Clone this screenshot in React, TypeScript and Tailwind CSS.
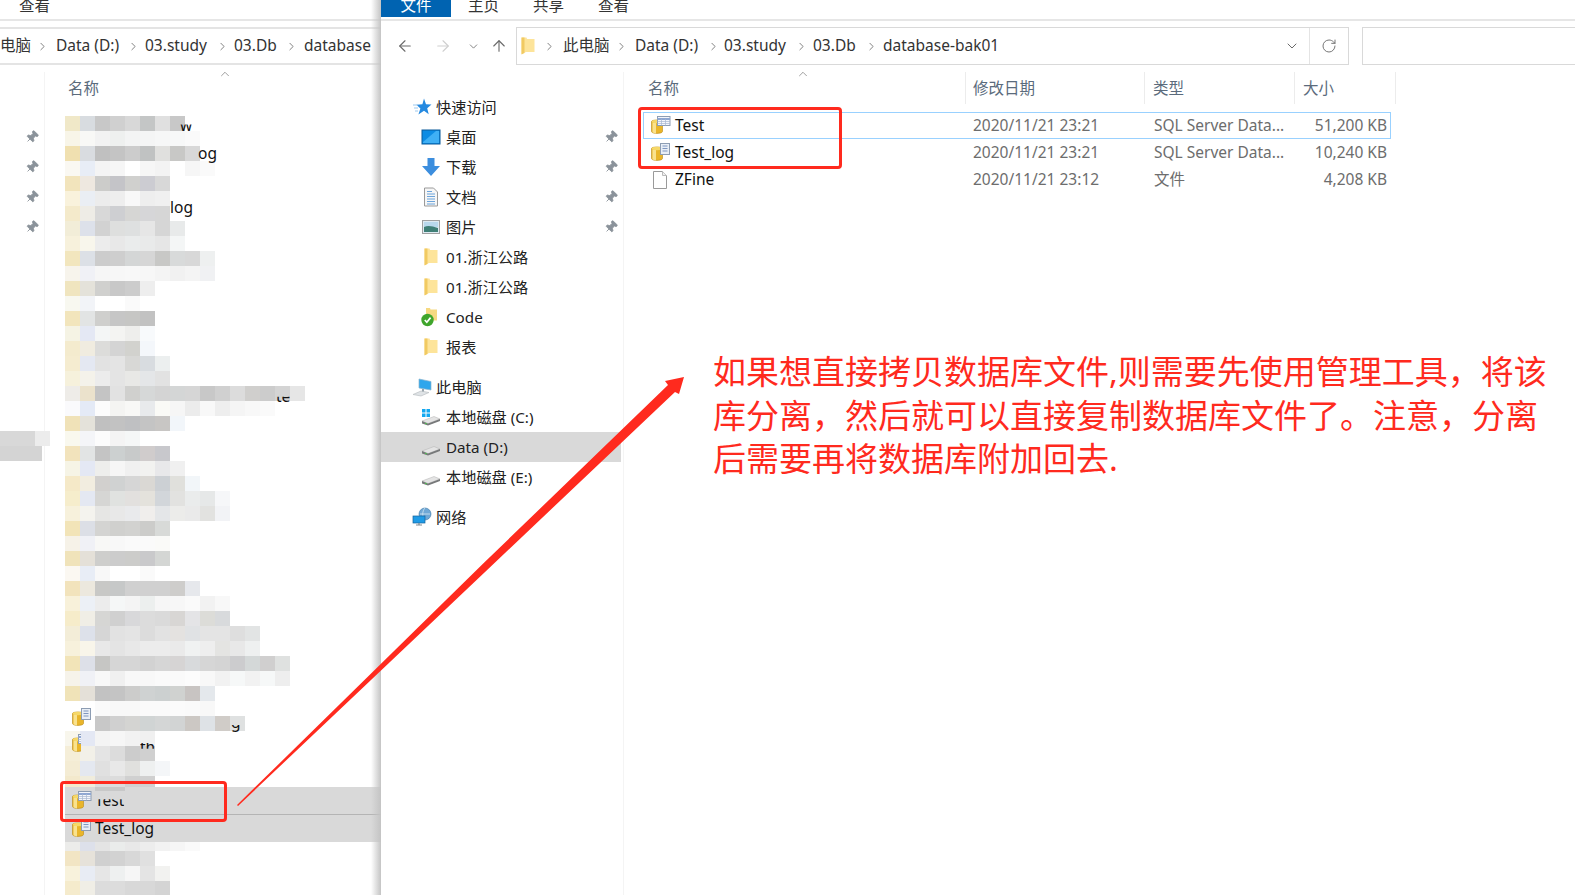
import { ArrowLeft, ArrowRight, ArrowUp, ChevronDown, ChevronRight, ChevronUp, Pin, RotateCw } from "lucide-react";
import type { ReactNode } from "react";

// Blurred file names in the left window: one string per 15px row, one colour per 15px cell.
const mosaicTop = [
  "f0e8c8 d8dce0 c8c8c8 d0d0d0 d8d8d8 c4c6c6 e0e0e0 c8c8c8",
  "f8f5e8 f8f8f6 f2f2f2 eef0ef f3f4f4 f4f5f5 f6f7f7 f7f8f8 fafafa",
  "f0e0b0 d9dce0 c0c0c0 c4c4c4 cccccc c0c2c2 e0e0de c8c8c6 d8d8d8",
  "faf8f2 e8edf6 f4f4f4 f6f6f6 ffffff f6f6f6 f3f3f3 ffffff f6f6f6 fafafa",
  "f2e4bc eee8e0 ccccca c4c4c8 d0d0ce ccccd2 d8d8d8",
  "f9f2dc eaeef4 ececec eeeeee f8f8f8 eeeeee f0f0f0",
  "f4eacb eeece6 d8d8d8 cecfd2 d6d6d4 d6d6d8 d6d6d6",
  "f2edd8 dde1ea d2d2d2 dedfde dee0e0 e6e6e6 d6d6d6 e8eaea",
  "f7f1dc f8f6ec ececec e8e8e8 eaecec e9eaea e6e6e6 f4f6f6",
  "f2e6be dce0e6 cccccc cecece d4d6d6 d6d6d6 c8c8c6 d8dada d8d8d8 eef0f0",
  "f7f4ec f0f1f6 f6f6f6 f7f7f7 f8f8f8 f7f7f7 f4f4f4 f1f1f1 f4f4f4 f0f1f3",
  "f0e5bf e4e2da d0d0ce c8c8c8 cccccc eeeeee",
  "f8f8f0 f2f4f8 ffffff ffffff fafafa ffffff",
  "f2e5bc e2e4e4 cfcfcd c6c6c6 c6c6c4 c2c2c2",
  "f5f3e4 e4e8f4 f4f6f6 f4f4f2 eeeeec f8fafc",
  "f4ebce f0ece0 dcdcda d4d4d4 d2d2ce f4f7fb",
  "f5ecd0 e4e8f2 e2e2e2 e4e4e4 d8d8d6 d8dce0 ecefef",
  "f6f1dc f4f2ea ececec e4e4e4 e8e8e6 e4e6e8 e2e2e2",
  "eeece8 ebe2cc c4c4c4 e2e2e2 d0d0ce d6d8d8 d4d4d4 d4d6d6 d6d6d6 c8c8c8 d0d0d0 dcdcdc d0cfcd cccccc d4d4d4 e6e6e6",
  "fafafc e4eaf6 fcfcfc f4f4f2 f8f8f6 e8eaec fafaf6 f6f6f6 ececec f8f8f8 eeeeee f5f5f5 f8f8f8 fafafa",
  "f0e2b8 e4e2da c0c0c0 c2c2c2 bfc0c2 c4c4c4 c8c6c4 f2f6fa",
  "f9f8ee f4f5f8 fcfcfc f4f4f4 f5f7f7",
  "f2e3bc e2e4e4 c4c4c4 ccd0d0 c8caca d0cccc c8c8cc",
  "f6f4e6 e4e8f4 eeeeec f6f6f6 f0f0f0 f2f2f0 e8e8ea f0f0f0",
  "f5e9c8 f2ede0 d2d0ce d0d2d2 d6d6d6 dad8d4 ccd0d4 e0e0dc f2f6f9",
  "f6edcc e4e8f2 d6d6d4 e0e2e0 e2e0de e4e2dc d2d6da e2e2e0 eaecec e6e8e8 f6f7f9",
  "f7f1dc f4f3ee e6e6e4 e8e8e8 e9eaec f0eeec e4e6e8 ececea eaeaea e2e2e0 f2f3f6",
  "f2e4b8 dcdfe6 d4d4d2 d0d0ce d2d2d0 ccccca d8dad8",
  "f6f2e8 f0f1f6 f8f8f6 f8f8f8 fafafa fafafa fafaf8",
  "f0e3ba e4e0d8 cececc cccccc ccccca c9c9cb d4d6d4",
  "fbf8f2 e8edf6 f8f8f8 ffffff ffffff fafafa",
  "f2e3bc ece8de c8c8c6 c6c8c8 d0d0d0 d0d0d0 d0d0d0 cecdcb e6e8ec",
  "f8f1da ecf0f6 ececec f5f7f7 f4f4f4 ecefee f6f6f6 f7f7f7 fafafa f2f2f2 f8f8f8",
  "f6ecca f0eee6 d6d6d4 d0d0d0 d8d8da dcdcdc dadada d8d6d4 e4e4e6 dcdcd8 d8dadc",
  "f3edd8 dde1ea d6d6d6 e2e2e2 e4e4e4 dcdcdc e2e2e2 e4e2e0 e0e2e4 e4e4e4 e4e4e4 dedede e2e4e4",
  "f7f1dc f8f5ea e8e8e8 e4e4e4 e8e8e8 ececec ececec eaeaea f0f2f2 eeeeee e4e4e2 e8e8e8 eef0f0",
  "f2e4b8 dde0e8 c6c6c4 d6d6d6 d6d6d6 d2d2d2 d6d6d6 d6d4d4 d8dadc d6d6d6 d4d4d4 ccccce d4d8d8 d0cfcf dfe1e0",
  "f6f3ea f0f1f6 f8f8f8 f0f0f0 f8f8f8 f8f8f8 fafafa fafafa fcfcfc f8f8f8 f2f2f2 f6f8f8 f2f2f2 f6f8f8 eeeeee",
  "f0e3b8 e4e0d8 c2c2c2 c4c4c4 cccccb cfd2d2 ccd0d0 d0d2d0 c8c4c2 e4e8ec",
  "ffffff ffffff fafafa f8f8f8 f8f8f8 fafafa fafafa fbfbfb fafafa f8f8f8",
  "ffffff ffffff c8c8c8 d0d0d0 d4d4d2 d0d4d4 d4d6d6 d2d4d4 ccc8c4 dee2e6 d0ccc8 dfe1e1",
  "f8f6ec e4e8f4 f4f4f4 f6f6f6 f2f2f2 f0f0f0",
  "f5eed8 f2f0e8 e4e4e4 dcdcdc cccccc d0d0d0",
  "f4ecd4 e4e8f0 e0e0e0 e8e8e8 e0e0de eef0f0 f4f6f8",
];
const mosaicBottom = [
  "ececea dde0ea e4e4e4 eaeceb e8e8e8 ededed f2f2f2 f6f6f6 fafafa",
  "f2e5c4 e6e2da d0d0d0 d2d2d2 d8d8d8 e0e0e0",
  "f8f2dc e8ecf4 e6e6e6 eef0f0 f6f6f6 e4e4e4 f2f2f0",
  "f5ebcc f0eee6 dcdcdc dcdcdc d8d8d8 d8d8d8 d4d4d4",
];

const sideItems: { label: string; icon: ReactNode; pinned?: boolean; selected?: boolean; level?: 1; gapBefore?: boolean }[] = [
  { label: "快速访问", icon: <StarIcon />, level: 1 },
  { label: "桌面", icon: <DesktopIcon />, pinned: true },
  { label: "下载", icon: <DownloadIcon />, pinned: true },
  { label: "文档", icon: <DocsIcon />, pinned: true },
  { label: "图片", icon: <PictureIcon />, pinned: true },
  { label: "01.浙江公路", icon: <FolderIcon /> },
  { label: "01.浙江公路", icon: <FolderIcon /> },
  { label: "Code", icon: <CodeFolderIcon /> },
  { label: "报表", icon: <FolderIcon /> },
  { label: "此电脑", icon: <PcIcon />, level: 1, gapBefore: true },
  { label: "本地磁盘 (C:)", icon: <DriveIcon windows /> },
  { label: "Data (D:)", icon: <DriveIcon />, selected: true },
  { label: "本地磁盘 (E:)", icon: <DriveIcon /> },
  { label: "网络", icon: <NetworkIcon />, level: 1, gapBefore: true },
];

const files = [
  { name: "Test", date: "2020/11/21 23:21", type: "SQL Server Data...", size: "51,200 KB", icon: <DbIcon />, active: true },
  { name: "Test_log", date: "2020/11/21 23:21", type: "SQL Server Data...", size: "10,240 KB", icon: <DbIcon log /> },
  { name: "ZFine", date: "2020/11/21 23:12", type: "文件", size: "4,208 KB", icon: <BlankFileIcon /> },
];

function DbIcon({ log = false }: { log?: boolean }) {
  return (
    <svg width="20" height="20" viewBox="0 0 20 20" className="shrink-0">
      <path d="M.5 5.500C.5 3.500 11.500 3.500 11.500 5.500V15.500c0 2.500-11 2.500-11 0Z" fill="#e9b52a" stroke="#b98a14" strokeWidth=".6" />
      <path d="M1.500 6.500h3.500v11L1.500 16.500Z" fill="#f9e28e" />
      <ellipse cx="6" cy="5.500" rx="5.200" ry="1.700" fill="#f6d868" />
      {log ? (
        <g>
          <rect x="9.500" y=".5" width="9" height="11" fill="#e8eef6" stroke="#8d9db3" />
          <path d="M11.500 3h5M11.500 5.500h5M11.500 8h5" stroke="#7e96c0" />
        </g>
      ) : (
        <g>
          <rect x="6.500" y=".5" width="12.500" height="9" fill="#f4f6fb" stroke="#8d9db3" />
          <path d="M6.500 3h12.500" stroke="#8fa7d2" strokeWidth="2" />
          <path d="M6.500 5.500h12.500M6.500 7.500h12.500M10.500 3v6.500M14.500 3v6.500" stroke="#a8b8d0" strokeWidth=".7" />
        </g>
      )}
    </svg>
  );
}

function BlankFileIcon() {
  return (
    <svg width="20" height="20" viewBox="0 0 20 20" className="shrink-0">
      <path d="M2.500 1.500h9l4 4v13h-13Z" fill="#fff" stroke="#9a9a9a" />
      <path d="M11.500 1.500v4h4" fill="#f0f0f0" stroke="#bbb" />
    </svg>
  );
}

function FolderIcon() {
  return (
    <svg width="20" height="20" viewBox="0 0 20 20" className="shrink-0">
      <path d="M3.500 1.500h5l.5 1.500h7.500v13H8l-4.500 2Z" fill="#fde49a" />
      <path d="M3.500 1.500h3V17l-3 1.500Z" fill="#f1ca62" />
    </svg>
  );
}

function CodeFolderIcon() {
  return (
    <svg width="20" height="20" viewBox="0 0 20 20" className="shrink-0">
      <path d="M5 1h4l.5 1.500H16v11H9L5 16Z" fill="#f6d981" />
      <circle cx="6.500" cy="13" r="6.200" fill="#3fa52c" />
      <path d="m3.800 13 2 2.200 3.800-4.600" fill="none" stroke="#fff" strokeWidth="1.700" />
    </svg>
  );
}

function StarIcon() {
  return (
    <svg width="20" height="20" viewBox="0 0 20 20" className="shrink-0">
      <path d="m12 1.500 2 5.800 5.500.3-4.300 3.600 1.500 6-4.700-3.400-5.600 3.600 2-6-4-3.600 6-.5Z" fill="#2489e0" />
      <path d="M1 8h5M2 11h4M3 14h3" stroke="#9cc9ef" />
    </svg>
  );
}

function DesktopIcon() {
  return (
    <svg width="20" height="20" viewBox="0 0 20 20" className="shrink-0">
      <rect x="1" y="3" width="18" height="14" fill="#0c8ce4" stroke="#0a5a9a" />
      <path d="M2 15 15 4h3v12H2Z" fill="#3fb0f5" />
    </svg>
  );
}

function DownloadIcon() {
  return (
    <svg width="20" height="20" viewBox="0 0 20 20" className="shrink-0">
      <path d="M6.500 1h7v8H19l-9 10-9-10h5.500Z" fill="#3c8ede" />
    </svg>
  );
}

function DocsIcon() {
  return (
    <svg width="20" height="20" viewBox="0 0 20 20" className="shrink-0">
      <path d="M3.500 1h9l4 4v14h-13Z" fill="#f6f6f6" stroke="#9a9a9a" />
      <path d="M6 4.500h5M6 7h8M6 9.500h8M6 12h8M6 14.500h8M6 17h8" stroke="#5c9bd8" strokeWidth=".9" />
    </svg>
  );
}

function PictureIcon() {
  return (
    <svg width="20" height="20" viewBox="0 0 20 20" className="shrink-0">
      <rect x="1.500" y="3.500" width="17" height="13" fill="#dfeaf2" stroke="#a0a0a0" />
      <rect x="3" y="5" width="14" height="5" fill="#b9d8ec" />
      <path d="M3 10c4-2 8-1 14 1v4H3Z" fill="#3f7f76" />
    </svg>
  );
}

function PcIcon() {
  return (
    <svg width="20" height="20" viewBox="0 0 20 20" className="shrink-0">
      <path d="M7 2 19 4.500V13L7 11Z" fill="#2ea6ec" stroke="#8ab4cf" strokeWidth=".7" />
      <path d="M1 17.500 9 14l8 1.500-8 3.500Z" fill="#dfe3e6" stroke="#b4b8bc" strokeWidth=".6" />
      <path d="M11 12v2.500" stroke="#9aa5ad" strokeWidth="2" />
    </svg>
  );
}

function DriveIcon({ windows = false }: { windows?: boolean }) {
  return (
    <svg width="20" height="20" viewBox="0 0 20 20" className="shrink-0">
      <path d="M1 14 13 9.500 19 12 7 16.500Z" fill="#e4e4e4" stroke="#b0b0b0" strokeWidth=".5" />
      <path d="M1 14v2.500l6 2 12-4.500V12L7 16.500Z" fill="#77797a" />
      <path d="M4 16.200l2 .7" stroke="#4fc24f" />
      {windows && (
        <g fill="#13a8f0">
          <rect x="1" y="2" width="3.500" height="3.500" />
          <rect x="5.500" y="2" width="3.500" height="3.500" />
          <rect x="1" y="6.500" width="3.500" height="3.500" />
          <rect x="5.500" y="6.500" width="3.500" height="3.500" />
        </g>
      )}
    </svg>
  );
}

function NetworkIcon() {
  return (
    <svg width="20" height="20" viewBox="0 0 20 20" className="shrink-0">
      <circle cx="13" cy="7" r="6" fill="#6fa8d6" stroke="#3c78a8" strokeWidth=".6" />
      <path d="M8 7h10M13 1c-3 3-3 9 0 12" stroke="#d6e8f4" strokeWidth=".8" fill="none" />
      <rect x="1" y="9" width="12" height="7" fill="#1f9be6" stroke="#16629a" strokeWidth=".7" />
      <path d="M4 18h6M7 16v2" stroke="#7f8a92" strokeWidth="1.200" />
    </svg>
  );
}

function Crumb({ children, width }: { children: ReactNode; width: string }) {
  return <span className={`${width} -mt-[1px] shrink-0 whitespace-nowrap`}>{children}</span>;
}

function CrumbSep({ className }: { className: string }) {
  return <ChevronRight size={13} strokeWidth={1.6} className={`shrink-0 text-[#6f6f6f] ${className}`} />;
}

function MosaicRow({ row, height = "h-[15px]" }: { row: string; height?: string }) {
  return (
    <div className={`flex ${height}`}>
      {row.split(" ").map((c, i) => (
        <div key={i} className="w-[15px]" style={{ backgroundColor: `#${c}` }} />
      ))}
    </div>
  );
}

function LeftWindow() {
  return (
    <div className="relative w-[381px] shrink-0 overflow-hidden">
      <div className="h-[21px] overflow-hidden border-b-2 border-[#e6e6e6] pl-[19px] text-[#333] leading-[10px]">查看</div>
      <div className="h-[51px] pt-[6px]">
        <div className="flex h-[38px] items-center border-y-2 border-[#e4e4e4] text-[#333]">
          <Crumb width="w-[32px]">电脑</Crumb>
          <CrumbSep className="ml-[4px] mr-[7px]" />
          <Crumb width="w-[66px]">Data (D:)</Crumb>
          <CrumbSep className="mx-[5px]" />
          <Crumb width="w-[66px]">03.study</Crumb>
          <CrumbSep className="mx-[5px]" />
          <Crumb width="w-[45px]">03.Db</Crumb>
          <CrumbSep className="ml-[6px] mr-[6px]" />
          <Crumb width="w-[70px]">database</Crumb>
        </div>
      </div>

      <div className="flex h-[823px]">
        <div className="relative w-[45px] shrink-0 border-r border-[#f4f4f4] pt-[50px]">
          {[0, 1, 2, 3].map((i) => (
            <div key={i} className="flex h-[30px] items-center justify-end pr-[5px]">
              <Pin size={14} fill="currentColor" strokeWidth={1.5} className="rotate-45 text-[#8b939b]" />
            </div>
          ))}
          <div className="mt-[189px] flex h-[15px] w-[50px]">
            <div className="w-[35px] bg-[#d8d8d8]" />
            <div className="w-[15px] bg-[#ececec]" />
          </div>
          <div className="h-[15px] w-[42px] bg-[#d4d4d4]" />
        </div>

        <div className="relative flex-1 pl-[20px]">
          <div className="relative h-[44px] pl-[3px] pt-[5px] text-[#5b6b7c]">
            名称
            <ChevronUp size={14} strokeWidth={1.2} className="absolute left-[153px] -top-[5px] text-[#777]" />
          </div>
          {mosaicTop.map((row, i) => (
            <MosaicRow key={i} row={row} />
          ))}
          <MosaicRow row="f3e9cc f0ecdc dcdcdc dcdcdc d0d0d0 d0d0d0" height="h-[11px]" />

          <div className="flex h-[27px] items-center gap-[5px] bg-[#d9d9d9] pl-[7px] text-[#111]">
            <DbIcon />
            <span className="-ml-[2px] [clip-path:inset(45%_0_0_0)]">Test</span>
          </div>
          <div className="h-px bg-[#b4b4b4]" />
          <div className="flex h-[27px] items-center gap-[5px] bg-[#d9d9d9] pl-[7px] text-[#111]">
            <DbIcon log />
            <span className="-ml-[2px]">Test_log</span>
          </div>
          <MosaicRow row={mosaicBottom[0]} height="h-[9px]" />
          {mosaicBottom.slice(1).map((row, i) => (
            <MosaicRow key={i} row={row} />
          ))}

          {/* bits of file names showing past the blur */}
          <span className="absolute left-[135px] top-[42px] text-[#111] [clip-path:inset(45%_0_0_0)]">w</span>
          <span className="absolute left-[153px] top-[70px] text-[#111]">og</span>
          <span className="absolute left-[125px] top-[124px] text-[#111]">log</span>
          <span className="absolute left-[231px] top-[313px] text-[#111] [clip-path:inset(50%_0_0_0)]">te</span>
          <span className="absolute left-[186px] top-[639px] text-[#111] [clip-path:inset(60%_0_0_0)]">g</span>
          <span className="absolute left-[95px] top-[664px] text-[#111] [clip-path:inset(30%_0_45%_0)]">th</span>
          <div className="absolute left-[27px] top-[636px]">
            <DbIcon log />
          </div>
          <div className="absolute left-[27px] top-[662px] [clip-path:inset(0_55%_0_0)]">
            <DbIcon />
          </div>
          <div className="absolute left-[50px] top-[715px] h-[4px] w-[30px] bg-[#c8c8c8]" />
        </div>
      </div>

      <div className="absolute inset-y-0 right-0 w-[10px] bg-gradient-to-r from-transparent to-[#c4c4c4]" />
    </div>
  );
}

function RightWindow() {
  return (
    <div className="flex min-w-0 flex-1 flex-col">
      <div className="flex h-[21px] gap-[34px] overflow-hidden border-b-2 border-[#e6e6e6] leading-[10px] text-[#333]">
        <div className="mr-[-17px] h-[17px] w-[70px] bg-[#0063b1] text-center text-white">文件</div>
        <span>主页</span>
        <span>共享</span>
        <span>查看</span>
      </div>

      <div className="flex h-[51px] pt-[6px]">
        <div className="flex h-[38px] w-[135px] shrink-0 items-center text-[#6a6a6a]">
          <ArrowLeft size={18} strokeWidth={1.5} className="ml-[15px]" />
          <ArrowRight size={18} strokeWidth={1.5} className="ml-[20px] text-[#cfcfcf]" />
          <ChevronDown size={13} strokeWidth={1.5} className="ml-[15px]" />
          <ArrowUp size={18} strokeWidth={1.5} className="ml-[10px]" />
        </div>
        <div className="flex h-[38px] w-[833px] items-center border border-[#d9d9d9] text-[#333]">
          <div className="ml-[1px] w-[20px]">
            <FolderIcon />
          </div>
          <CrumbSep className="ml-[5px] mr-[7px]" />
          <Crumb width="w-[48px]">此电脑</Crumb>
          <CrumbSep className="ml-[4px] mr-[7px]" />
          <Crumb width="w-[67px]">Data (D:)</Crumb>
          <CrumbSep className="ml-[5px] mr-[4px]" />
          <Crumb width="w-[66px]">03.study</Crumb>
          <CrumbSep className="mx-[5px]" />
          <Crumb width="w-[47px]">03.Db</Crumb>
          <CrumbSep className="mx-[5px]" />
          <Crumb width="w-[120px]">database-bak01</Crumb>
          <ChevronDown size={16} strokeWidth={1.5} className="ml-auto mr-[9px] text-[#6a6a6a]" />
          <div className="flex h-full w-[39px] items-center justify-center border-l border-[#e4e4e4]">
            <RotateCw size={16} strokeWidth={1.5} className="text-[#777]" />
          </div>
        </div>
        <div className="ml-[13px] h-[38px] flex-1 border-y border-l border-[#d9d9d9]" />
      </div>

      <div className="flex min-h-0 flex-1">
        <nav className="w-[243px] shrink-0 border-r border-[#f4f4f4] pt-[20px] text-[15.200px] text-[#222]">
          {sideItems.map((item, i) => (
            <div
              key={i}
              className={`flex h-[30px] items-center ${item.gapBefore ? "mt-[10px]" : ""} ${
                item.selected ? "mr-[2px] bg-[#d9d9d9]" : ""
              } ${item.level === 1 ? "gap-[4px] pl-[31px]" : "gap-[5px] pl-[40px]"}`}
            >
              {item.icon}
              <span className="pt-[1px]">{item.label}</span>
              {item.pinned && (
                <Pin size={14} fill="currentColor" strokeWidth={1.5} className="ml-auto mr-[5px] rotate-45 text-[#8b939b]" />
              )}
            </div>
          ))}
        </nav>

        <main className="min-w-0 flex-1 pl-[19px]">
          <div className="relative grid h-[32px] grid-cols-[323px_179px_150px_101px] text-[#5b6b7c]">
            <div className="border-r border-[#ececec] pl-[5px] pt-[5px]">名称</div>
            <div className="border-r border-[#ececec] pl-[7px] pt-[5px]">修改日期</div>
            <div className="border-r border-[#ececec] pl-[8px] pt-[5px]">类型</div>
            <div className="border-r border-[#ececec] pl-[8px] pt-[5px]">大小</div>
            <ChevronUp size={14} strokeWidth={1.2} className="absolute left-[153px] -top-[5px] text-[#777]" />
          </div>
          <div className="mt-[8px]">
            {files.map((f) => (
              <div
                key={f.name}
                className={`grid h-[27px] w-[748px] grid-cols-[323px_179px_150px_96px] items-center ${
                  f.active ? "border border-[#99d1ff]" : "border border-transparent"
                }`}
              >
                <div className="flex items-center gap-[4px] pl-[7px] text-[#111]">
                  {f.icon}
                  <span className="pt-[1px]">{f.name}</span>
                </div>
                <div className="pl-[6px] pt-[1px] text-[#6d6d6d]">{f.date}</div>
                <div className="pl-[8px] pt-[1px] text-[#6d6d6d]">{f.type}</div>
                <div className="pr-[5px] pt-[1px] text-right text-[#6d6d6d]">{f.size}</div>
              </div>
            ))}
          </div>
          <p className="ml-[70px] mt-[157px] w-[850px] text-[33px] leading-[43.500px] text-[#ff2a1e]">
            如果想直接拷贝数据库文件,则需要先使用管理工具，将该
            <br />
            库分离，然后就可以直接复制数据库文件了。注意，分离
            <br />
            后需要再将数据库附加回去.
          </p>
        </main>
      </div>
    </div>
  );
}

export default function App() {
  return (
    <div className="relative flex h-[895px] w-[1575px] overflow-hidden bg-white font-['Noto_Sans','Noto_Sans_CJK_SC',sans-serif] text-[15.500px]">
      <LeftWindow />
      <RightWindow />

      {/* red callouts drawn on top of both windows */}
      <div className="absolute left-[60px] top-[781px] h-[41px] w-[167px] rounded-[4px] border-[3px] border-[#ff2a1e]" />
      <div className="absolute left-[638px] top-[107px] h-[62px] w-[204px] rounded-[4px] border-[3px] border-[#ff2a1e]" />
      <svg className="absolute inset-0" width="1575" height="895" viewBox="0 0 1575 895">
        <polygon
          points="237,805 484.500,562.300 668,385 665,381 684,377 679,394 675,392 489.500,567.700 238,806"
          fill="#ff2a1e"
        />
      </svg>
    </div>
  );
}
